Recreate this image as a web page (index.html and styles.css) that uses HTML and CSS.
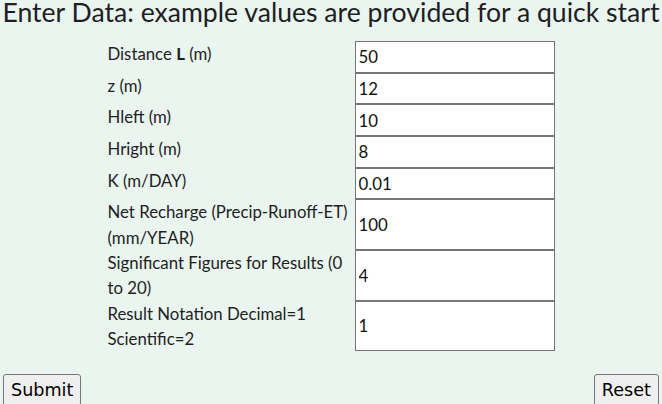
FILE: index.html
```html
<!DOCTYPE html>
<html lang="en">
<head>
    <meta charset="UTF-8">
    <meta name="viewport" content="width=device-width, initial-scale=1.0">
    <title>Enter Data</title>
    <link rel="stylesheet" href="styles.css">
</head>
<body>
    <h2 class="page-title">Enter Data: example values are provided for a quick start</h2>
    <form class="data-form" id="dataForm">
        <div class="data-grid">
            <label for="distL">Distance <b>L</b> (m)</label>
            <input type="text" id="distL" value="50">

            <label for="z">z (m)</label>
            <input type="text" id="z" value="12">

            <label for="hleft">Hleft (m)</label>
            <input type="text" id="hleft" value="10">

            <label for="hright">Hright (m)</label>
            <input type="text" id="hright" value="8">

            <label for="k">K (m/DAY)</label>
            <input type="text" id="k" value="0.01">

            <label for="recharge">Net Recharge (Precip-Runoff-ET) (mm/YEAR)</label>
            <input type="text" id="recharge" value="100">

            <label for="sigfig">Significant Figures for Results (0 to 20)</label>
            <input type="text" id="sigfig" value="4">

            <label for="notation">Result Notation Decimal=1 Scientific=2</label>
            <input type="text" id="notation" value="1">
        </div>
        <div class="form-buttons">
            <button type="submit">Submit</button>
            <button type="reset">Reset</button>
        </div>
    </form>
</body>
</html>
```

FILE: styles.css
```css
* {
    margin: 0;
    padding: 0;
    box-sizing: border-box;
}

body {
    background: #e9f5ee;
    color: #1e1e24;
    font-family: Lato, "Open Sans", sans-serif;
    overflow: hidden;
}

.page-title {
    font-size: 26.6px;
    font-weight: normal;
    line-height: 24px;
    white-space: nowrap;
    text-align: center;
    margin-bottom: 17px;
}

.data-grid {
    display: grid;
    grid-template-columns: 247px 200px;
    justify-content: center;
    grid-auto-rows: minmax(31.7px, auto);
}

.data-grid label {
    font-size: 16.8px;
    line-height: 25.3px;
    padding-right: 2px;
}

.data-grid input {
    width: 100%;
    height: 100%;
    border: 1px solid #767676;
    background: #fff;
    font-family: Lato, "Open Sans", sans-serif;
    font-size: 16.8px;
    color: #111;
    padding: 0 3px;
    outline: none;
}

.form-buttons {
    display: flex;
    justify-content: space-between;
    padding: 23px 3px 0;
}

.form-buttons button {
    font-family: "DejaVu Sans", Verdana, sans-serif;
    font-size: 17.6px;
    background: #efefef;
    border: 1px solid #767676;
    border-radius: 3px;
    color: #000;
    padding: 5px 7px;
}
```
